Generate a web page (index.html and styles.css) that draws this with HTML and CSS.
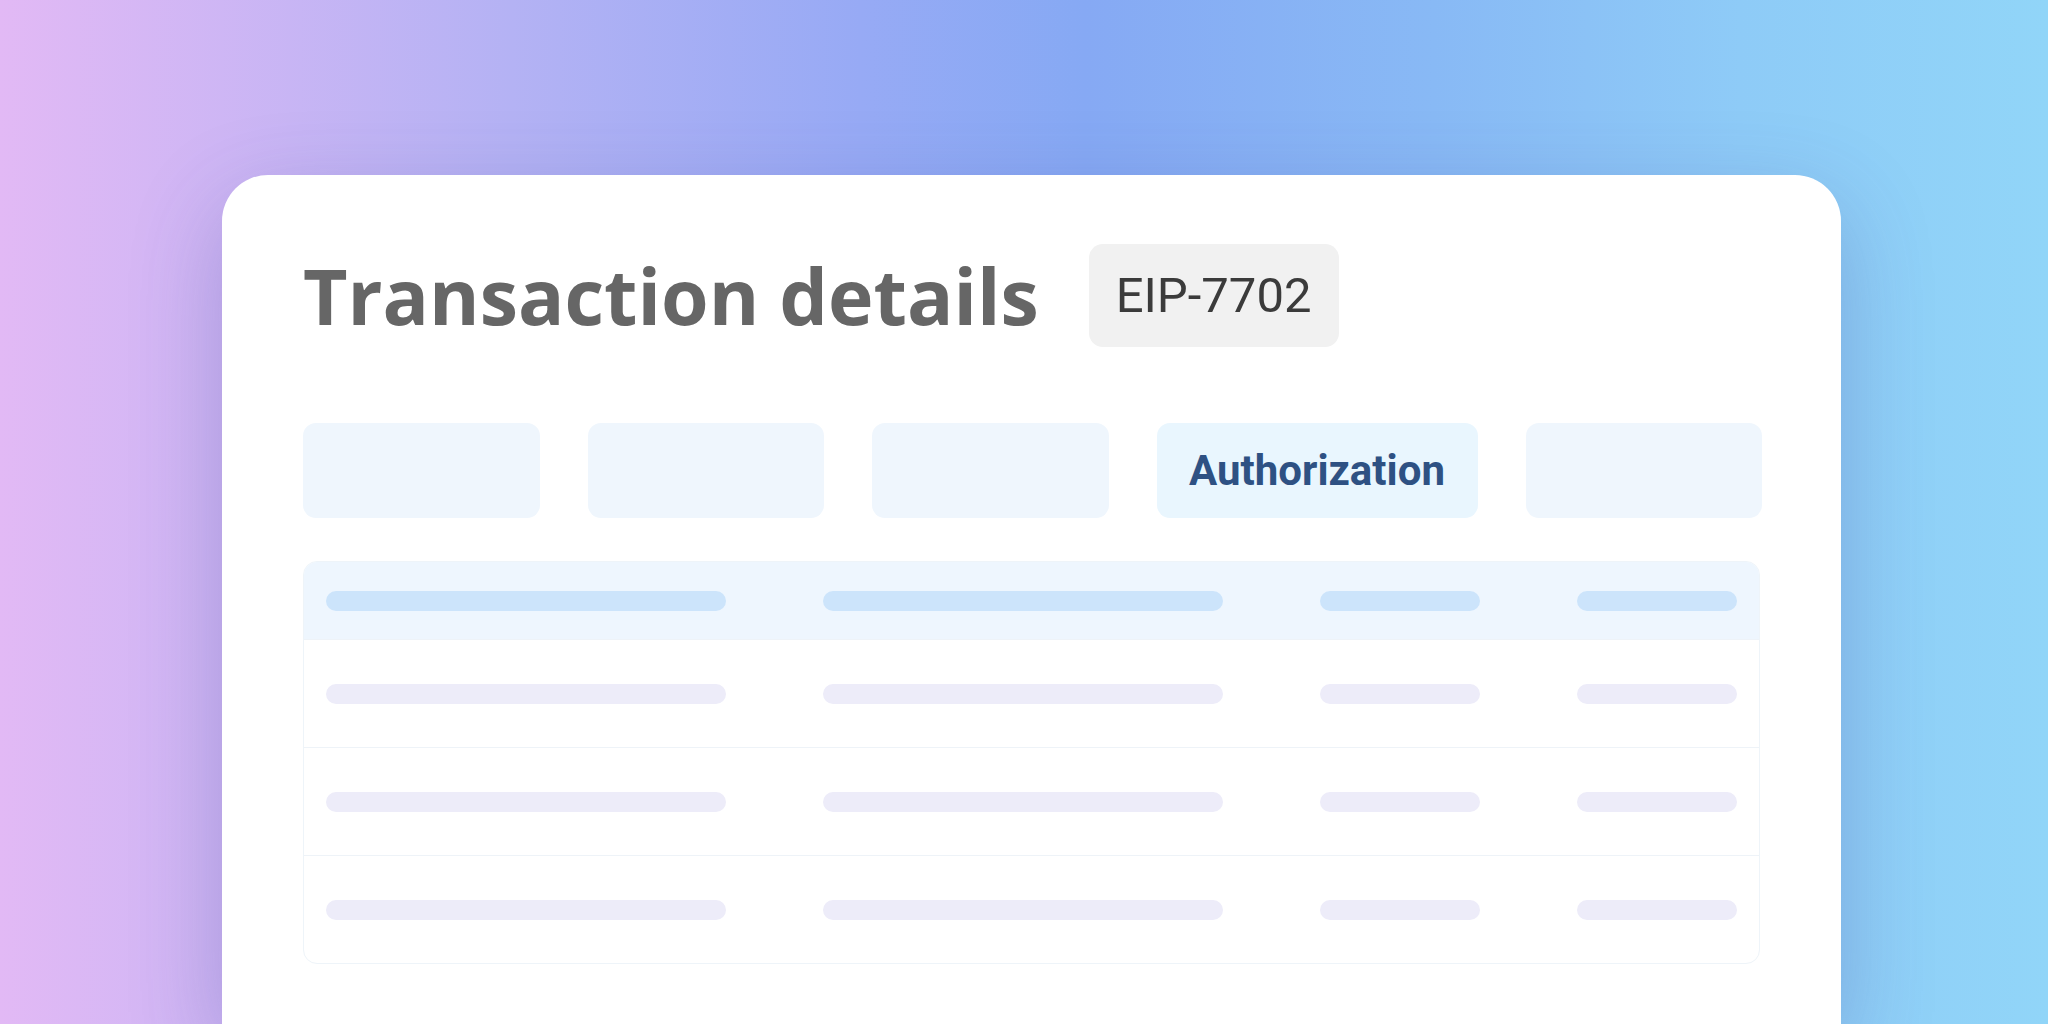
FILE: index.html
```html
<!DOCTYPE html>
<html>
<head>
	<title>Transaction details</title>
	<link rel="stylesheet" href="styles.css">
</head>
<body>
	<div class="stage">
		<div class="card">
			<div class="card-head">
				<h1 class="title">Transaction details</h1>
				<span class="badge">EIP-7702</span>
			</div>

			<div class="tabs">
				<div class="tab"></div>
				<div class="tab"></div>
				<div class="tab"></div>
				<div class="tab active">Authorization</div>
				<div class="tab"></div>
			</div>

			<div class="table">
				<div class="row head">
					<span class="bar wide"></span>
					<span class="bar wide"></span>
					<span class="bar"></span>
					<span class="bar"></span>
				</div>
				<div class="row">
					<span class="bar wide"></span>
					<span class="bar wide"></span>
					<span class="bar"></span>
					<span class="bar"></span>
				</div>
				<div class="row">
					<span class="bar wide"></span>
					<span class="bar wide"></span>
					<span class="bar"></span>
					<span class="bar"></span>
				</div>
				<div class="row">
					<span class="bar wide"></span>
					<span class="bar wide"></span>
					<span class="bar"></span>
					<span class="bar"></span>
				</div>
			</div>
		</div>
	</div>
</body>
</html>
```

FILE: styles.css
```css
html, body {
	margin: 0;
	height: 1024px;
	overflow: hidden;
}
body {
	background: linear-gradient(90deg, #e2b9f5 0%, #b4b2f4 25%, #97aaf5 42%, #86a9f4 53%, #88b9f5 70%, #8ecbf7 85%, #91d5f8 100%);
}

.stage {
	padding: 175px 0 0 222px;
}

.card {
	width: 1457px;
	height: 780px;
	padding: 69px 81px 0 81px;
	background-color: white;
	border-radius: 46px 46px 0 0;
	box-shadow: 0 30px 90px rgba(70, 70, 150, 0.28);
}

/* titre + badge */
.card-head {
	display: flex;
	align-items: center;
	height: 103px;
}
.title {
	margin: 0 50px 0 0;
	font-family: "Open Sans", sans-serif;
	font-weight: 700;
	font-size: 77px;
	color: #666666;
	letter-spacing: 0;
}
.badge {
	display: flex;
	align-items: center;
	height: 103px;
	padding: 0 28px 0 27px;
	background-color: #f1f1f1;
	border-radius: 14px;
	font-family: "Roboto", sans-serif;
	font-size: 49px;
	color: #3b3b3b;
}

/* onglets */
.tabs {
	display: grid;
	grid-template-columns: 1fr 1fr 1fr 321px 1fr;
	gap: 48px;
	margin-top: 76px;
	width: 1459px;
}
.tab {
	height: 95px;
	background-color: #eff6fd;
	border-radius: 13px;
}
.tab.active {
	display: flex;
	align-items: center;
	justify-content: center;
	background-color: #e9f6fe;
	font-family: "Roboto", sans-serif;
	font-weight: 700;
	font-size: 42px;
	color: #2e5183;
}

/* tableau */
.table {
	margin-top: 43px;
	border: 1px solid #eef4f9;
	border-radius: 14px;
	overflow: hidden;
}
.row {
	display: flex;
	justify-content: space-between;
	align-items: center;
	height: 107px;
	padding: 0 22px 0 22px;
	border-top: 1px solid #eef3f8;
}
.row.head {
	height: 77px;
	border-top: none;
	background-color: #eef6fe;
}
.bar {
	width: 160px;
	height: 20px;
	border-radius: 10px;
	background-color: #edecf9;
}
.bar.wide {
	width: 400px;
}
.row.head .bar {
	background-color: #cce4fb;
}
```
